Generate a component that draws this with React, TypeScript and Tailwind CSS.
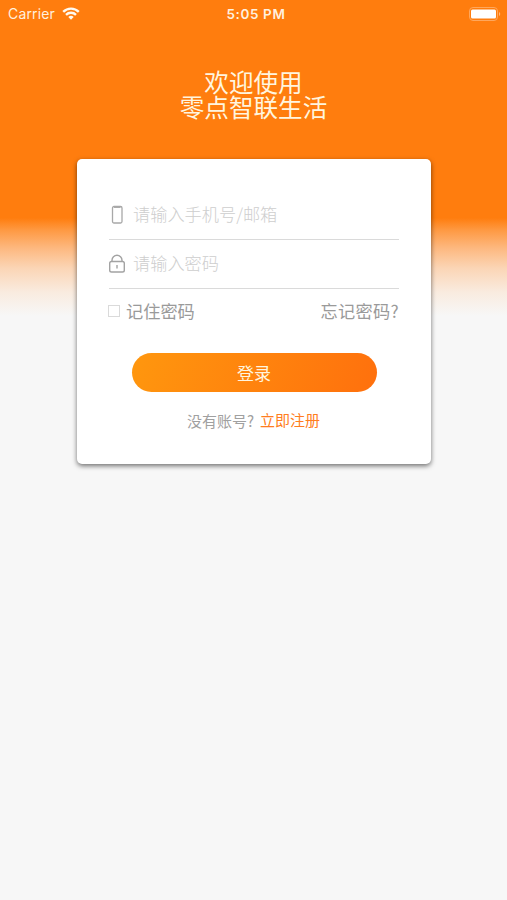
import React from "react";

function StatusBar() {
  return (
    <header className="grid h-7 grid-cols-3 items-center pl-[8px] pr-[6px] font-['Inter','Liberation_Sans',sans-serif] text-[14px] leading-7 text-[#fff0df]">
      <div className="flex items-center gap-[7px]">
        <span className="text-[14px] tracking-[0.15px]">Carrier</span>
        <svg width="18" height="13" viewBox="0 0 18 13" fill="none" stroke="#fffaf0" strokeWidth="2.4" className="-mt-[2px]">
          <path d="M1.2 4.8a11.2 11.2 0 0 1 15.6 0" />
          <path d="M4 7.8a7.2 7.2 0 0 1 10 0" />
          <path d="M9 12.8 6.3 10a3.9 3.9 0 0 1 5.4 0Z" fill="#fffaf0" stroke="none" />
        </svg>
      </div>
      <span className="whitespace-nowrap pl-[3px] text-center text-[13.5px] font-semibold tracking-[0.6px]">5:05 PM</span>
      <svg className="-mt-px justify-self-end" width="32" height="14" viewBox="0 0 32 14" fill="none">
        <rect x=".5" y=".5" width="28" height="13" rx="3.5" stroke="#ffa75c" />
        <rect x="2" y="2.5" width="25" height="9" rx="1.5" fill="#fff" />
        <path d="M30 5v4c1-.5 1.2-1.2 1.2-2S31 5.500 30 5Z" fill="#ffb77c" />
      </svg>
    </header>
  );
}

function PhoneIcon() {
  return (
    <svg width="18" height="20" viewBox="0 0 18 20" fill="none" stroke="#a8a8a8">
      <rect x="4.500" y="1.500" width="9.500" height="16.500" rx="1.500" strokeWidth="1.300" />
      <path d="M6 2.200h6.500" strokeWidth="1.500" />
    </svg>
  );
}

function LockIcon() {
  return (
    <svg width="18" height="20" viewBox="0 0 18 20" fill="none" stroke="#a3a3a3" strokeWidth="1.400">
      <rect x="1.700" y="7.500" width="14.600" height="10.500" rx="1.800" />
      <path d="M4 7.500V6.200a5 5 0 0 1 10 0v1.300" />
      <path d="M9 11v3.500" />
    </svg>
  );
}

function Field({ icon, placeholder, type }: { icon: React.ReactNode; placeholder: string; type: string }) {
  return (
    <label className="flex h-[49px] items-center border-b border-[#dadada]">
      <span className="-ml-px mr-[7px] shrink-0">{icon}</span>
      <input
        type={type}
        placeholder={placeholder}
        className="w-full min-w-0 bg-transparent pb-[2px] text-[17.2px] leading-6 font-light outline-none placeholder:text-[#cecece]"
      />
    </label>
  );
}

export default function App() {
  return (
    <main className="h-[900px] w-full overflow-hidden bg-[#f7f7f7] bg-[linear-gradient(180deg,#ff7d0e_0px,#ff7d0e_218px,#fe9942_230px,#fdb87f_248px,#fbd5b5_268px,#f9ebdf_292px,#f7f7f7_316px)] font-['Noto_Sans_CJK_SC',sans-serif]">
      <StatusBar />
      <h1 className="mt-[41px] text-center text-[24.6px] leading-[25px] font-normal text-[#fff5df]">
        欢迎使用
        <br />
        零点智联生活
      </h1>
      <section className="mt-[40px] ml-[77px] h-[305px] w-[354px] rounded-[5px] bg-white px-[32px] pt-[32px] shadow-[0_2px_5px_rgba(0,0,0,0.55)]">
        <Field icon={<PhoneIcon />} placeholder="请输入手机号/邮箱" type="text" />
        <Field icon={<LockIcon />} placeholder="请输入密码" type="password" />
        <div className="mt-[10px] flex h-6 items-center justify-between text-[17.2px] leading-6 text-[#9a9a9a]">
          <label className="-ml-px flex items-center gap-[6px]">
            <input type="checkbox" className="size-3 appearance-none border border-[#dadada] bg-white" />
            记住密码
          </label>
          <a className="tracking-[0.3px]">忘记密码?</a>
        </div>
        <button className="mx-auto mt-[30px] block h-[39px] w-[245px] rounded-full bg-[linear-gradient(110deg,#ff970e,#ff700d)] text-[17px] leading-[38px] text-[#fff5df]">
          登录
        </button>
        <div className="-ml-px mt-[18px] flex items-center justify-center gap-[6px] text-[15px] leading-[22px] text-[#a0a0a0]">
          <span>没有账号?</span>
          <a className="-mt-[3px] text-[#ff7d20]">立即注册</a>
        </div>
      </section>
    </main>
  );
}
